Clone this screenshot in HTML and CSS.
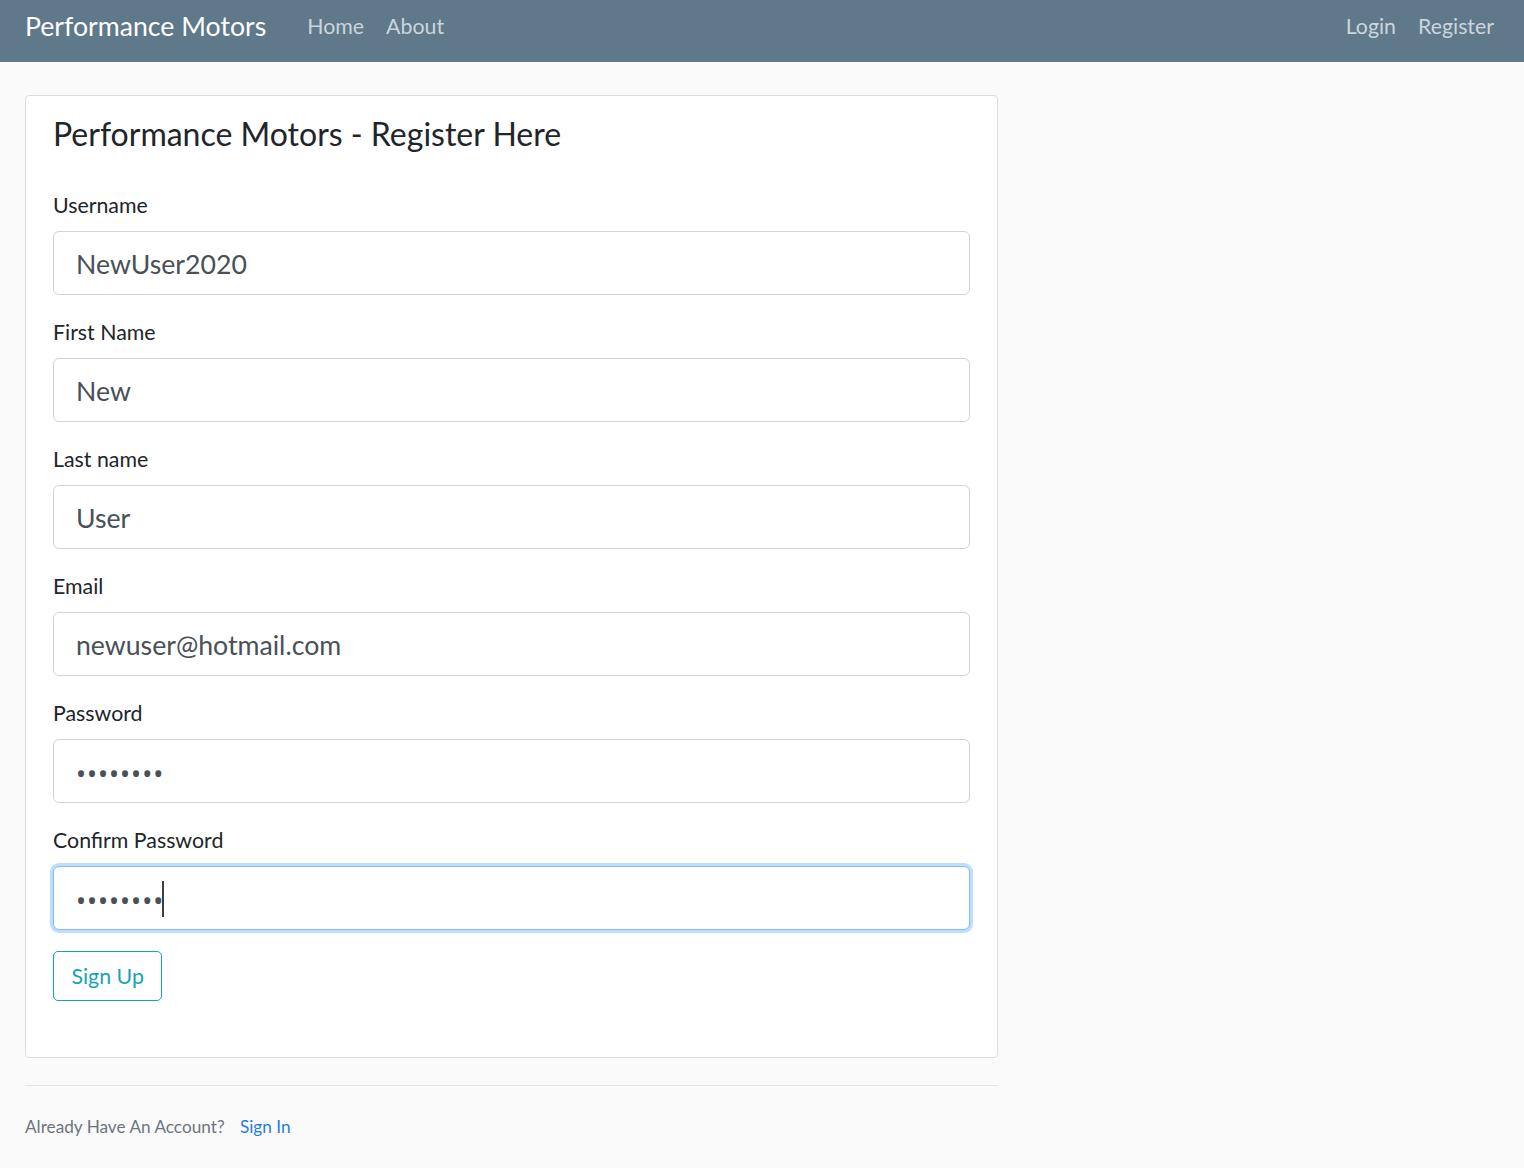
FILE: index.html
```html
<!DOCTYPE html>
<html lang="en">
<head>
<meta charset="utf-8">
<title>Register - Performance Motors</title>
<link rel="stylesheet" href="styles.css">
</head>
<body>
<header class="site-header">
  <nav class="navbar">
    <a class="brand" href="#">Performance Motors</a>
    <div class="nav-left">
      <a class="nav-link" href="#">Home</a>
      <a class="nav-link" href="#">About</a>
    </div>
    <div class="nav-right">
      <a class="nav-link" href="#">Login</a>
      <a class="nav-link" href="#">Register</a>
    </div>
  </nav>
</header>
<main class="main">
  <div class="col">
    <div class="content-section">
      <form class="register-form">
        <fieldset class="fieldset">
          <legend class="legend">Performance Motors - Register Here</legend>
          <div class="form-group">
            <label class="form-label" for="username">Username</label>
            <input class="form-control" id="username" type="text" value="NewUser2020">
          </div>
          <div class="form-group">
            <label class="form-label" for="first">First Name</label>
            <input class="form-control" id="first" type="text" value="New">
          </div>
          <div class="form-group">
            <label class="form-label" for="last">Last name</label>
            <input class="form-control" id="last" type="text" value="User">
          </div>
          <div class="form-group">
            <label class="form-label" for="email">Email</label>
            <input class="form-control" id="email" type="email" value="newuser@hotmail.com">
          </div>
          <div class="form-group">
            <label class="form-label" for="password">Password</label>
            <input class="form-control form-password" id="password" type="password" value="password">
          </div>
          <div class="form-group">
            <label class="form-label" for="confirm">Confirm Password</label>
            <div class="input-wrap">
              <input class="form-control form-password is-focused" id="confirm" type="password" value="password">
              <span class="caret"></span>
            </div>
          </div>
        </fieldset>
        <div class="submit-group">
          <button class="btn-outline-info" type="submit">Sign Up</button>
        </div>
      </form>
    </div>
    <div class="account-note">
      <small class="text-muted">Already Have An Account? <a class="signin" href="#">Sign In</a></small>
    </div>
  </div>
</main>
</body>
</html>
```
FILE: styles.css
```css
* { box-sizing: border-box; }
html, body { margin: 0; }
body {
  background: #fafafa;
  color: #212529;
  font-family: "Lato", "Noto Sans", sans-serif;
  font-size: 21.33px;
  line-height: 1.5;
}
a { text-decoration: none; }

.navbar {
  display: flex;
  align-items: center;
  height: 62px;
  padding: 0 19px 11px 25px;
  background: #5f788a;
}
.brand {
  color: #fff;
  font-size: 26.67px;
  line-height: 40px;
  margin-right: 30px;
}
.nav-left, .nav-right { display: flex; }
.nav-right { margin-left: auto; }
.nav-link {
  color: #cbd5db;
  padding: 0 11px;
  line-height: 32px;
}

.main {
  padding: 33px 25px 20px;
}
.col { width: 973px; }

.content-section {
  background: #fff;
  border: 1px solid #ddd;
  border-radius: 4px;
  padding: 19px 27px 56px;
  margin-bottom: 27px;
}
.register-form { margin: 0; }
.fieldset { border: 0; margin: 0; padding: 0; min-width: 0; }
.legend {
  padding: 0;
  font-size: 32px;
  line-height: 38.4px;
  margin-bottom: 36px;
  color: #212529;
}
.form-group { margin-bottom: 21px; }
.form-label { display: block; margin-bottom: 10px; line-height: 32px; }
.input-wrap { position: relative; }
.form-control {
  display: block;
  width: 100%;
  height: 64px;
  padding: 2px 22px 0;
  font-family: inherit;
  font-size: 26.67px;
  color: #495057;
  background: #fff;
  border: 1px solid #ced4da;
  border-radius: 6px;
  outline: none;
}
.form-password {
  font-family: "Noto Sans", sans-serif;
  letter-spacing: 1px;
  padding: 4px 22px 0 22px;
}
.form-control.is-focused {
  border-color: #80bdff;
  box-shadow: 0 0 0 3px rgba(0, 123, 255, .25);
}
.caret {
  position: absolute;
  left: 109px;
  top: 15px;
  width: 2px;
  height: 36px;
  background: #3a3f44;
}
.btn-outline-info {
  font-family: inherit;
  font-size: 21.33px;
  line-height: 32px;
  padding: 8px 17.5px;
  color: #17a2b8;
  background: transparent;
  border: 1px solid #17a2b8;
  border-radius: 5px;
}
.account-note {
  border-top: 1px solid #e3e3e3;
  padding-top: 24px;
}
.text-muted { color: #6c757d; font-size: 17.2px; }
.signin { color: #1f7fdc; margin-left: 11px; }
```
